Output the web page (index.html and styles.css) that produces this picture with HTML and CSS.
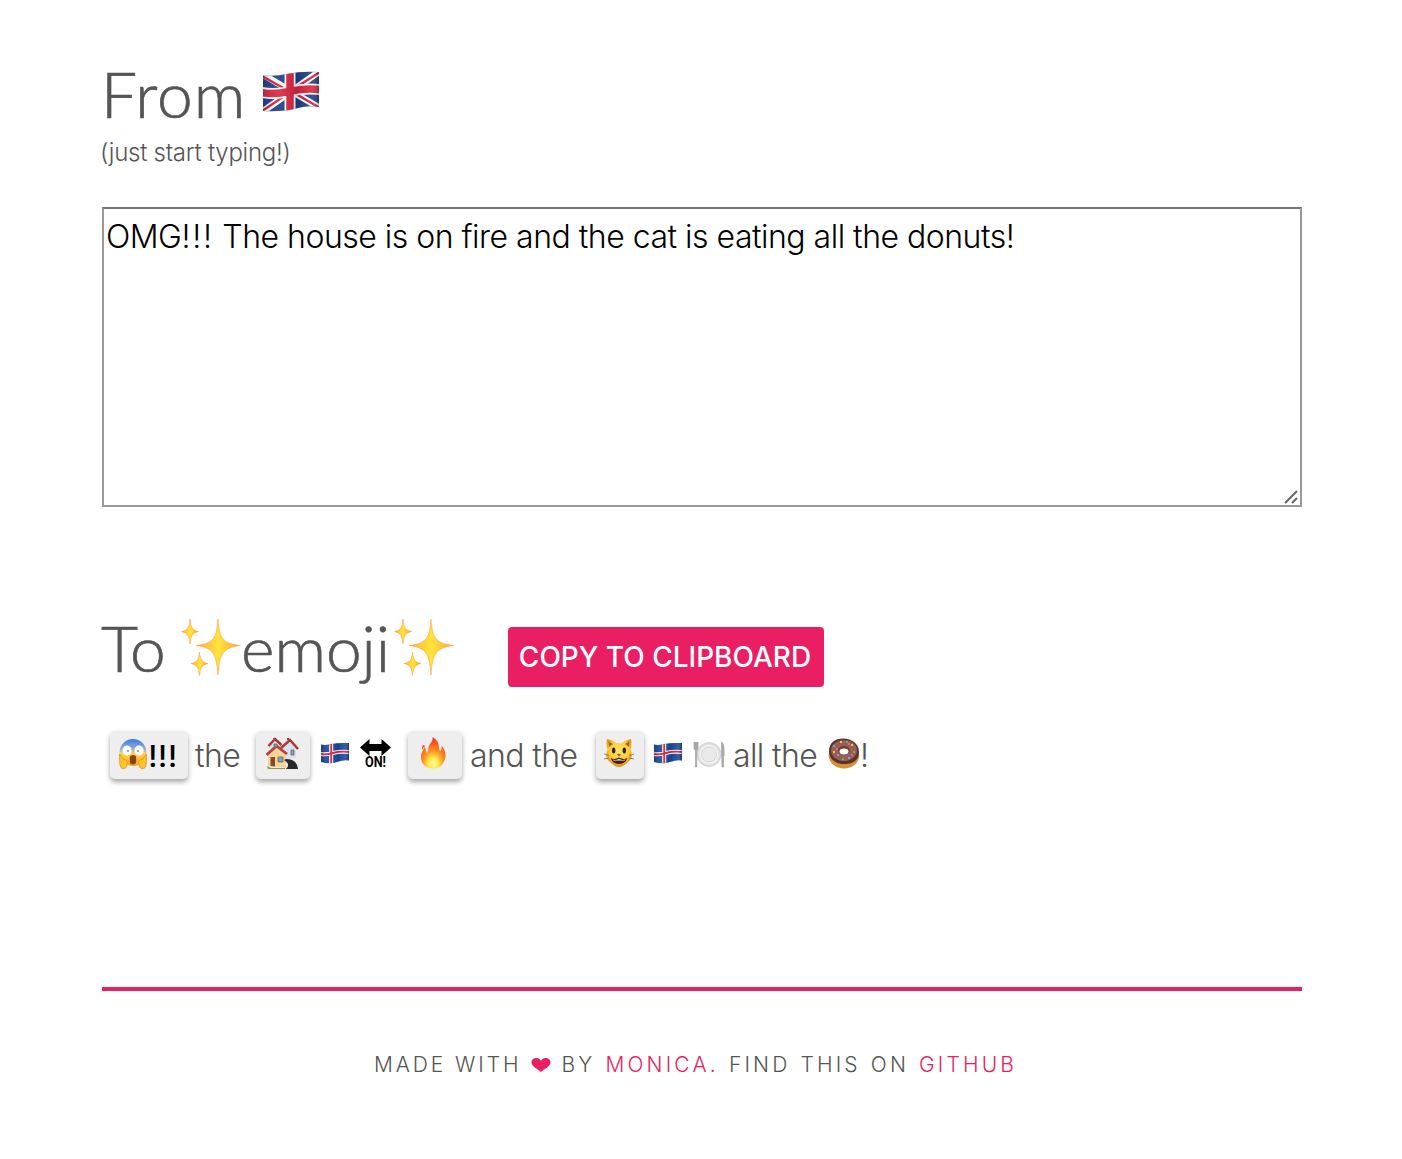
FILE: index.html
```html
<!DOCTYPE html>
<html lang="en">
<head>
<meta charset="utf-8">
<title>Emoji translate</title>
<link rel="stylesheet" href="styles.css">
</head>
<body>
<svg class="defs" width="0" height="0" aria-hidden="true">
  <defs>
    <linearGradient id="gold"><stop offset="0" stop-color="#ffac35"/><stop offset=".5" stop-color="#ffe43d"/><stop offset="1" stop-color="#ffa52b"/></linearGradient>
    <linearGradient id="wave"><stop offset="0" stop-color="#001" stop-opacity=".15"/><stop offset=".28" stop-color="#fff" stop-opacity=".1"/><stop offset=".6" stop-color="#001" stop-opacity=".12"/><stop offset=".85" stop-color="#fff" stop-opacity=".1"/><stop offset="1" stop-color="#001" stop-opacity=".3"/></linearGradient>
    <linearGradient id="scream" x2="0" y2="1"><stop offset="0" stop-color="#3d79e8"/><stop offset=".35" stop-color="#91adcf"/><stop offset=".55" stop-color="#ffd54a"/><stop offset="1" stop-color="#f6a51b"/></linearGradient>
    <radialGradient id="flame" cx=".5" cy=".85" r=".8"><stop offset="0" stop-color="#ffffa0"/><stop offset=".28" stop-color="#ffe343"/><stop offset=".55" stop-color="#ff8b1f"/><stop offset="1" stop-color="#f5391b"/></radialGradient>
    <radialGradient id="cat" cx=".5" cy=".4" r=".6"><stop offset="0" stop-color="#ffe66a"/><stop offset=".65" stop-color="#fdc938"/><stop offset="1" stop-color="#d98a17"/></radialGradient>
    <radialGradient id="plate"><stop offset="0" stop-color="#f6f6f6"/><stop offset=".6" stop-color="#e2e2e2"/><stop offset=".68" stop-color="#f7f7f7"/><stop offset="1" stop-color="#d2d2d2"/></radialGradient>
    <symbol id="sparkles" viewBox="0 0 60 58">
      <g fill="url(#gold)" stroke="#ff9a3a" stroke-opacity=".6" stroke-width=".9">
        <path d="M37 1C38.500 20 41 25.500 59.500 27.500C41 29.500 38.500 37 37 57C35.500 37 33 29.500 15 27.500C33 25.500 35.500 20 37 1Z"/>
        <path d="M9 1C10 10 11 12 17.500 13.500C11 15 10 18 9 26C8 18 7 15 .5 13.500C7 12 8 10 9 1Z"/>
        <path d="M18.500 34C19.500 42 20.500 44 27 45.500C20.500 47 19.500 50 18.500 57.500C17.500 50 16.500 47 10 45.500C16.500 44 17.500 42 18.500 34Z"/>
      </g>
    </symbol>
    <symbol id="iceland" viewBox="0 0 28 22">
      <clipPath id="iceclip"><path d="M0 2.500Q4 3.500 10 2T28 1V18.500Q23 17.500 16 20T0 20Z"/></clipPath>
      <g clip-path="url(#iceclip)">
        <path fill="#1b4b9d" d="M0 0H28V22H0Z"/>
        <path d="M10.200 0V22M0 12Q5 13 12 11T28 10" stroke="#fff" stroke-width="4" fill="none"/>
        <path d="M10.200 0V22M0 12Q5 13 12 11T28 10" stroke="#dc2338" stroke-width="1.900" fill="none"/>
        <path fill="url(#wave)" d="M0 0H28V22H0Z"/>
      </g>
    </symbol>
  </defs>
</svg>
<main class="page">
  <h1 class="title title-top"><span class="title-from">From</span>
    <svg class="uk" viewBox="0 0 58 42">
      <clipPath id="ukclip"><path d="M1 4Q11 6 25 3T57 1V36Q47 34 34 37.500T1 40Z"/></clipPath>
      <g clip-path="url(#ukclip)">
        <path fill="#1c3f88" d="M0 0H58V42H0Z"/>
        <path d="M0 3L58 37M0 41L58 0" stroke="#fff" stroke-width="6.500"/>
        <path d="M0 5L25 19M0 40L24 24M33 17L58 1M34 23L58 37" stroke="#d32039" stroke-width="2.400"/>
        <path d="M28 0V42M0 21.500Q12 24 27 20.500T58 18.500" stroke="#fff" stroke-width="11" fill="none"/>
        <path d="M28 0V42M0 21.500Q12 24 27 20.500T58 18.500" stroke="#d9263f" stroke-width="7.500" fill="none"/>
        <path fill="url(#wave)" d="M0 0H58V42H0Z"/>
      </g>
    </svg>
  </h1>
  <p class="hint">(just start typing!)</p>
  <div class="field">
    <div class="input" role="textbox" aria-multiline="true" contenteditable="true" spellcheck="false">OMG<span class="bangs">!!!</span> The house is on fire and the cat is eating all the donuts!</div>
    <svg class="grip" viewBox="0 0 16 16"><path d="M1 14L13 2M8 14L13 9" stroke="#666" stroke-width="2" fill="none"/></svg>
  </div>
  <div class="to-row">
    <h1 class="title title-to"><span class="to">To</span><svg class="sparkles"><use href="#sparkles"/></svg><span class="emoji">emoji</span><svg class="sparkles"><use href="#sparkles"/></svg></h1>
    <button class="copy">COPY TO CLIPBOARD</button>
  </div>
  <div class="output">
    <span class="chip chip-omg">
      <svg width="30" height="32" viewBox="0 0 30 32">
        <circle cx="15" cy="15.500" r="13.500" fill="url(#scream)"/>
        <ellipse cx="9" cy="13.500" rx="4.600" ry="5" fill="#fff"/><ellipse cx="21" cy="13.500" rx="4.600" ry="5" fill="#fff"/>
        <circle cx="10" cy="14" r="1" fill="#8a8a8a"/><circle cx="20" cy="14" r="1" fill="#8a8a8a"/>
        <rect x="11.800" y="18" width="6.400" height="9.500" rx="3.200" fill="#884414"/>
        <path d="M1.500 17C3 18 4 21 6 23C8 22 9.500 24 9 26C9 30 8 31.500 5 31.500C1 31 2 26 1.500 17ZM28.500 17C27 18 26 21 24 23C22 22 20.500 24 21 26C21 30 22 31.500 25 31.500C29 31 28 26 28.500 17Z" fill="#ffc52b" stroke="#e08b18" stroke-width=".8"/>
      </svg><b>!!!</b>
    </span>
    <span class="word">the</span>
    <span class="chip chip-house">
      <svg width="34" height="33" viewBox="0 0 34 33">
        <path d="M4 9L10 2L16 8V14H5ZM17 10L25 3L31 10V21H17Z" fill="#d8e1ef"/>
        <path d="M3.500 9L10 2L16.500 8M16 11L25 3L33 12" fill="none" stroke="#a83a35" stroke-width="2.500"/>
        <path d="M8 1H10V4M22 3V1H24V3" fill="#a83a35"/>
        <path d="M3 16L12 9L21 16V31L3 29Z" fill="#f4d69c"/>
        <path d="M1.500 18L11.500 9L22 17" fill="none" stroke="#b6403a" stroke-width="2.700"/>
        <path d="M21 22Q32 22 33 32L21 32Q26 27 19 23Z" fill="#292a2c"/>
        <path d="M5.500 20H10V29.500L5.500 29Z" fill="#8b4826"/>
        <path d="M13 20H18V25H13ZM26 13H29V18H26ZM9 7H12V10H9Z" fill="#6ba7d0" stroke="#7d5340" stroke-width=".7"/>
        <path d="M2 29L6 31H20V32H3Z" fill="#8a9a58"/>
      </svg>
    </span>
    <svg class="flag" width="28" height="22"><use href="#iceland"/></svg>
    <svg class="on" width="32" height="31" viewBox="0 0 32 31"><path d="M0 8.500L9.500 0V5H21.500V0L31 8.500L21.500 17V12H9.500V17Z"/><text x="5" y="28" textLength="21" lengthAdjust="spacingAndGlyphs">ON!</text></svg>
    <span class="chip chip-fire">
      <svg width="26" height="32" viewBox="0 0 26 32"><path d="M12.500 0C21 5 18 11 20 14C22 13 22 9 21 8C26 13 26 19 25 22C23 29 18 31.500 13 31.500C6 31.500 1 27 1 20C1 15 4 13 4 10C6 11 6 15 7 16C9 12 8 10 10 7C12 4 13 3 12.500 0Z" fill="url(#flame)"/><path d="M2 11C2 8 4 7 5 9C4 10 3 11 2 13Z" fill="#f5562d"/></svg>
    </span>
    <span class="word">and the</span>
    <span class="chip chip-cat">
      <svg width="30" height="30" viewBox="0 0 30 30">
        <path d="M3 1Q9 2 12 5H18Q21 2 27 1Q28 8 26.500 12Q30 20 24 24Q19 29 15 29Q11 29 6 24Q0 20 3.500 12Q2 8 3 1Z" fill="url(#cat)"/>
        <path d="M4.500 3L9 6L5 9ZM25.500 3L21 6L25 9Z" fill="#a66b22"/>
        <ellipse cx="9.700" cy="12.500" rx="1.700" ry="3" fill="#302016"/><ellipse cx="20.300" cy="12.500" rx="1.700" ry="3" fill="#302016"/>
        <path d="M13 16H17L15 18.500Z" fill="#88502b"/>
        <path d="M6.500 20Q11 22 15 19.500Q19 22 23.500 20Q21 26 15 26Q9 26 6.500 20Z" fill="#442014"/><path d="M8.500 21.500Q11.500 22.500 15 21Q18.500 22.500 21.500 21.500L20.500 22.500H9.500Z" fill="#fff"/>
        <path d="M0 16L5 17.500M0 21L5 20M30 16L25 17.500M30 21L25 20" stroke="#8c6d39" stroke-width=".8"/>
      </svg>
    </span>
    <svg class="flag" width="28" height="22"><use href="#iceland"/></svg>
    <svg class="dish" width="32" height="27" viewBox="0 0 32 27">
      <circle cx="16" cy="13.500" r="12" fill="url(#plate)" stroke="#d0d0d0" stroke-width=".7"/><circle cx="16" cy="13.500" r="7.500" fill="#eaeaea" stroke="#ccc" stroke-width=".7"/>
      <path d="M1 1V7Q1 9 2.500 9V26H3.700V9Q5 9 5 7V1M3 1V8M28.500 1Q31.500 2 31 15H30.500V26H29Z" fill="#aaa5a6" stroke="#aaa5a6" stroke-width=".8"/>
    </svg>
    <span class="word">all the</span>
    <svg class="donut" width="32" height="31" viewBox="0 0 32 31">
      <ellipse cx="16" cy="17.500" rx="15.200" ry="13" fill="#d39338"/>
      <path d="M1 13C1 5 7 .5 15 .5C24 .5 31 6 31 14C31 22 25 26 18 26C8 27 1 21 1 13Z" fill="#5f3025"/>
      <ellipse cx="16" cy="12.500" rx="13" ry="10.500" fill="#966057"/>
      <ellipse cx="16" cy="12.500" rx="6" ry="4.500" fill="#71402d"/><ellipse cx="16" cy="13.500" rx="4.500" ry="3" fill="#fff"/>
      <path d="M5 8h2M9 17h2M20 20h2" stroke="#62aee2" stroke-width="2"/><path d="M12 4h2M23 7h2M5 14h2" stroke="#f2c447" stroke-width="2"/><path d="M25 14h2M14 21h2M18 4h2" stroke="#58ba58" stroke-width="2"/><path d="M8 11h2M23 17h2M20 6h2" stroke="#e86099" stroke-width="2"/>
    </svg>
    <span class="word last">!</span>
  </div>
  <footer class="footer"><span class="made">MADE WITH</span> <svg class="heart" viewBox="0 0 20 14"><path d="M10 14C7 11 .5 8.500 .5 4.500C.5 1 3.500 0 5.500 0C8 0 9.500 1.500 10 3C10.500 1.500 12 0 14.500 0C16.500 0 19.500 1 19.500 4.500C19.500 8.500 13 11 10 14Z"/></svg> BY <a>MONICA</a><span class="dot">.</span> FIND THIS ON <a>GITHUB</a></footer>
</main>
</body>
</html>
```
FILE: styles.css
```css
* { box-sizing: border-box; }
body { margin: 0; background: #fff; color: #555; font-family: Inter, "Liberation Sans", sans-serif; font-weight: 300; }
.defs { display: block; height: 0; }
.page { width: 1200px; margin-left: 102px; padding-top: 54px; }
.title { display: flex; align-items: flex-start; margin: 0; height: 80px; font: 300 64px/80px Lato, sans-serif; white-space: nowrap; -webkit-text-stroke: .7px #555; }
.title-top { height: 82px; }
.title-from { width: 161px; margin-left: -1px; letter-spacing: 1px; }
.uk { width: 58px; height: 42px; margin-top: 17px; }
.hint { margin: 0 0 0 -2px; height: 71px; padding-top: 2px; font-size: 24px; line-height: 30px; letter-spacing: -.25px; white-space: nowrap; }
.field { position: relative; height: 300px; }
.input { width: 1200px; height: 300px; padding: 9px 2px; border: 2px solid #999; border-top-color: #757575; outline: 0; overflow: hidden; background: #fff; color: #000; font: 300 32px/38px Inter, "Liberation Sans", sans-serif; letter-spacing: -.5px; }
.bangs { letter-spacing: 1.8px; }
.grip { position: absolute; right: 2px; bottom: 2px; width: 16px; height: 16px; }
.to-row { display: flex; align-items: flex-start; height: 123px; margin-top: 101px; }
.title-to { width: 406px; }
.to { width: 79px; margin-left: -1px; margin-right: 1px; }
.emoji { width: 153px; }
.sparkles { flex: none; width: 60px; height: 58px; margin-top: 10px; }
.copy { width: 316px; height: 60px; margin: 19px 0 0; padding: 0 2px 0 0; border: 0; border-radius: 4px; background: #e91e63; color: #fff; font: 500 28px/60px Inter, sans-serif; white-space: nowrap; }
.output { display: grid; grid-template-columns: 94px 60px 65px 39px 48px 63px 125px 58px 39px 41px 94px 35px 10px; height: 50px; font-size: 32px; line-height: 50px; white-space: nowrap; }
.word { letter-spacing: -.6px; margin-left: -1px; }
.last { margin-left: -3px; }
.chip { display: flex; height: 48px; border-radius: 5px; background: #eee; box-shadow: 0 3px 5px rgba(0,0,0,.35); color: #000; justify-content: center; padding-top: 6px; }
.chip svg { margin-left: -2px; }
.chip b { font-size: 30px; font-weight: 500; line-height: 38px; letter-spacing: .7px; }
.chip-omg { width: 78px; margin-left: 8px; }
.chip-house { width: 54px; }
.chip-fire { width: 54px; padding-right: 3px; }
.chip-cat { width: 48px; padding-top: 7px; }
.flag { margin-top: 11px; }
.on { margin-top: 8px; fill: #000; font: 700 14px Roboto, sans-serif; }
.dish { margin-top: 10px; }
.donut { margin-top: 7px; }
.footer { height: 120px; margin-top: 206px; padding-top: 59px; border-top: 4px solid #e91e63; padding-left: 272px; font-size: 21px; line-height: 29px; letter-spacing: 3.15px; word-spacing: 1px; white-space: nowrap; }
.made { letter-spacing: 2.9px; word-spacing: 0; }
.footer a, .dot { color: #e91e63; }
.heart { width: 20px; height: 14px; fill: #e91e63; }
```
